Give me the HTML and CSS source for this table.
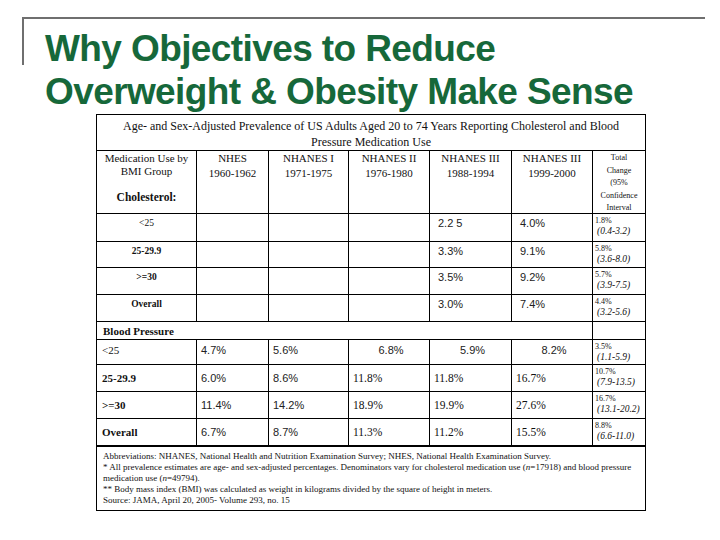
FILE: index.html
```html
<!DOCTYPE html>
<html>
<head>
<meta charset="utf-8">
<link rel="stylesheet" href="styles.css">
</head>
<body>
<header class="slide-head">
  <svg class="rule" width="683" height="2" viewBox="0 0 683 2" aria-hidden="true"><rect x="0" y="0" width="683" height="2" fill="#6f6f6f"/></svg>
  <h1 class="title">Why Objectives to Reduce<br>Overweight &amp; Obesity Make Sense</h1>
</header>
<div class="grid">
  <div class="c cap span7">Age- and Sex-Adjusted Prevalence of US Adults Aged 20 to 74 Years Reporting Cholesterol and Blood<br>Pressure Medication Use</div>

  <div class="c hd first"><div class="med">Medication Use by<br>BMI Group</div><div class="chol">Cholesterol:</div></div>
  <div class="c hd">NHES<br>1960-1962</div>
  <div class="c hd">NHANES I<br>1971-1975</div>
  <div class="c hd">NHANES II<br>1976-1980</div>
  <div class="c hd">NHANES III<br>1988-1994</div>
  <div class="c hd">NHANES III<br>1999-2000</div>
  <div class="c hd tot">Total<br>Change<br>(95%<br>Confidence<br>Interval</div>

  <div class="c lab">&lt;25</div>
  <div class="c"></div><div class="c"></div><div class="c"></div>
  <div class="c num">2.2 5</div>
  <div class="c num">4.0%</div>
  <div class="c tc"><span class="p">1.8%</span><span class="ci">(0.4-3.2)</span></div>

  <div class="c lab b">25-29.9</div>
  <div class="c"></div><div class="c"></div><div class="c"></div>
  <div class="c num">3.3%</div>
  <div class="c num">9.1%</div>
  <div class="c tc"><span class="p">5.8%</span><span class="ci">(3.6-8.0)</span></div>

  <div class="c lab b">&gt;=30</div>
  <div class="c"></div><div class="c"></div><div class="c"></div>
  <div class="c num">3.5%</div>
  <div class="c num">9.2%</div>
  <div class="c tc"><span class="p">5.7%</span><span class="ci">(3.9-7.5)</span></div>

  <div class="c lab b">Overall</div>
  <div class="c"></div><div class="c"></div><div class="c"></div>
  <div class="c num">3.0%</div>
  <div class="c num">7.4%</div>
  <div class="c tc"><span class="p">4.4%</span><span class="ci">(3.2-5.6)</span></div>

  <div class="c sec span6">Blood Pressure</div>
  <div class="c"></div>

  <div class="c bl r1">&lt;25</div>
  <div class="c num r1">4.7%</div>
  <div class="c num r1">5.6%</div>
  <div class="c num r1 ctr">6.8%</div>
  <div class="c num r1 ctr">5.9%</div>
  <div class="c num r1 ctr">8.2%</div>
  <div class="c tc"><span class="p">3.5%</span><span class="ci">(1.1-5.9)</span></div>

  <div class="c bl b rm">25-29.9</div>
  <div class="c num rm">6.0%</div>
  <div class="c num rm">8.6%</div>
  <div class="c sn rm">11.8%</div>
  <div class="c sn rm">11.8%</div>
  <div class="c sn rm">16.7%</div>
  <div class="c tc"><span class="p">10.7%</span><span class="ci">(7.9-13.5)</span></div>

  <div class="c bl b rm">&gt;=30</div>
  <div class="c num rm">11.4%</div>
  <div class="c num rm">14.2%</div>
  <div class="c sn rm">18.9%</div>
  <div class="c sn rm">19.9%</div>
  <div class="c sn rm">27.6%</div>
  <div class="c tc"><span class="p">16.7%</span><span class="ci">(13.1-20.2)</span></div>

  <div class="c bl b rm last">Overall</div>
  <div class="c num rm last">6.7%</div>
  <div class="c num rm last">8.7%</div>
  <div class="c sn rm last">11.3%</div>
  <div class="c sn rm last">11.2%</div>
  <div class="c sn rm last">15.5%</div>
  <div class="c tc last"><span class="p">8.8%</span><span class="ci">(6.6-11.0)</span></div>

  <div class="c notes span7">Abbreviations: NHANES, National Health and Nutrition Examination Survey; NHES, National Health Examination Survey.<br>* All prevalence estimates are age- and sex-adjusted percentages. Denominators vary for cholesterol medication use (<i>n</i>=17918) and blood pressure<br>medication use (<i>n</i>=49794).<br>** Body mass index (BMI) was calculated as weight in kilograms divided by the square of height in meters.<br>Source: JAMA, April 20, 2005- Volume 293, no. 15</div>
</div>
</body>
</html>
```
FILE: styles.css
```css
html, body {
  margin: 0;
  padding: 0;
  background: #ffffff;
}

body {
  padding-top: 17px;
}

.slide-head {
  position: relative;
  margin: 0 15px 0 22px;
  padding: 0;
}

.rule {
  display: block;
  width: 683px;
  height: 2px;
}

.slide-head::before {
  content: "";
  position: absolute;
  left: 0;
  top: 0;
  width: 2px;
  height: 48px;
  background: #6f6f6f;
}

.title {
  margin: 0;
  padding: 8px 0 0 23px;
  font-family: "Liberation Sans", Arial, sans-serif;
  font-weight: bold;
  font-size: 37px;
  line-height: 43px;
  letter-spacing: -0.6px;
  color: #16683a;
  white-space: nowrap;
}

.grid {
  margin: 1px 0 0 96px;
  width: 550px;
  box-sizing: border-box;
  display: grid;
  grid-template-columns: 100px 72px 80px 81px 82px 81px 53px;
  grid-template-rows: 36px 63px 28px 26px 27px 27px 18px 25px 27px 27px 28px 64px;
  border-left: 1px solid #000;
  border-top: 1px solid #000;
  font-family: "Liberation Serif", "Times New Roman", serif;
  color: #111;
}

.c {
  box-sizing: border-box;
  border-right: 1px solid #000;
  border-bottom: 1px solid #000;
  overflow: hidden;
}

.span7 { grid-column: span 7; }
.span6 { grid-column: span 6; }

.cap {
  text-align: center;
  font-size: 12px;
  line-height: 16px;
  padding-top: 3px;
}

.hd {
  text-align: center;
  font-size: 11px;
  line-height: 15px;
  padding-top: 0;
}

.first .med {
  line-height: 12.5px;
  padding-top: 1px;
  font-size: 11px;
}

.first .chol {
  margin-top: 13px;
  font-weight: bold;
  font-size: 11.5px;
  line-height: 14px;
}

.tot {
  font-size: 8px;
  line-height: 12.5px;
  padding-top: 1px;
}

.lab {
  text-align: center;
  font-size: 9.5px;
  line-height: 14px;
  padding-top: 2px;
}

.b { font-weight: bold; }

.num {
  font-family: "Liberation Sans", Arial, sans-serif;
  font-size: 11px;
  line-height: 14px;
  padding: 2px 0 0 8px;
  color: #222;
}

.sn {
  font-size: 11.5px;
  line-height: 14px;
  padding: 2px 0 0 4px;
}

.num.r1 { padding-left: 4px; }
.num.rm { padding-left: 4px; }
.ctr { text-align: center; padding-left: 0; }

.r1 { padding-top: 3px; }
.rm { padding-top: 6px; }

.bl {
  font-size: 11px;
  line-height: 14px;
  padding-left: 5px;
}

.sec {
  font-weight: bold;
  font-size: 11px;
  line-height: 14px;
  padding: 2px 0 0 6px;
}

.tc {
  padding: 1px 0 0 2px;
  line-height: 11px;
}

.tc .p {
  display: block;
  font-size: 8px;
}

.tc .ci {
  display: block;
  font-size: 9.5px;
  font-style: italic;
  padding-left: 2px;
}

.last { border-bottom-width: 2px; }

.notes {
  font-size: 9px;
  line-height: 11px;
  padding: 4px 0 0 6px;
  white-space: nowrap;
}
```
